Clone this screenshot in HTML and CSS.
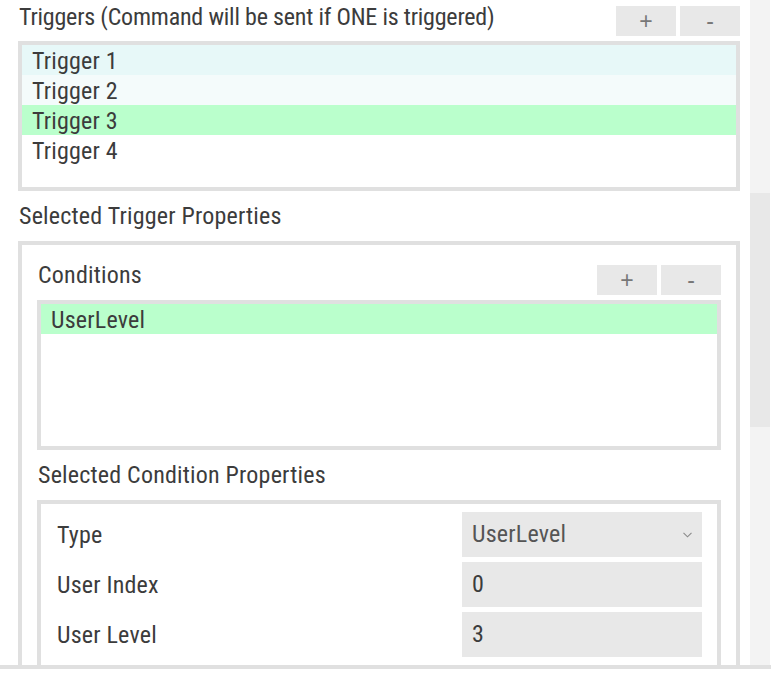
FILE: index.html
```html
<!DOCTYPE html>
<html lang="en">
<head>
<meta charset="utf-8">
<title>Triggers</title>
<link rel="stylesheet" href="styles.css">
</head>
<body>
<div class="viewport">
  <div class="content">
    <div class="list-header">
      <div class="title title-main">Triggers (Command will be sent if ONE is triggered)</div>
      <div class="btns">
        <button class="btn">+</button>
        <button class="btn">-</button>
      </div>
    </div>
    <div class="listbox">
      <div class="item item-hover">Trigger 1</div>
      <div class="item item-alt">Trigger 2</div>
      <div class="item item-selected">Trigger 3</div>
      <div class="item">Trigger 4</div>
    </div>
    <div class="section-label">Selected Trigger Properties</div>
    <div class="panel">
      <div class="list-header">
        <div class="title title-sub">Conditions</div>
        <div class="btns">
          <button class="btn">+</button>
          <button class="btn">-</button>
        </div>
      </div>
      <div class="listbox">
        <div class="item item-selected">UserLevel</div>
      </div>
      <div class="section-label">Selected Condition Properties</div>
      <div class="panel panel-inner">
        <div class="prop-row">
          <div class="prop-label">Type</div>
          <div class="field">
            <span class="field-value muted">UserLevel</span>
            <svg class="chevron" width="9" height="6" viewBox="0 0 9 6"><path d="M0.5 0.8 L4.5 4.8 L8.5 0.8" fill="none" stroke="#8a8a8a" stroke-width="1.1"/></svg>
          </div>
        </div>
        <div class="prop-row">
          <div class="prop-label">User Index</div>
          <div class="field"><span class="field-value">0</span></div>
        </div>
        <div class="prop-row">
          <div class="prop-label">User Level</div>
          <div class="field"><span class="field-value">3</span></div>
        </div>
      </div>
    </div>
  </div>
  <div class="scrollbar">
    <div class="scroll-thumb"></div>
  </div>
</div>
</body>
</html>
```
FILE: styles.css
```css
* { box-sizing: border-box; }

html, body {
  margin: 0;
  padding: 0;
  background: #ffffff;
}

body {
  font-family: "Roboto Condensed", "Liberation Sans Narrow", "Arial Narrow", "Liberation Sans", sans-serif;
  font-size: 24px;
  letter-spacing: 0.2px;
  color: #3c3c3c;
  width: 771px;
}

.viewport {
  display: flex;
  height: 669px;
  overflow: hidden;
  border-bottom: 4px solid #e0e0e0;
}

.content {
  flex: 0 0 750px;
  padding: 0 10px 0 18px;
}

.list-header {
  display: flex;
  justify-content: space-between;
  align-items: flex-start;
  height: 41px;
}

.title {
  line-height: 34px;
  padding-left: 1px;
  white-space: nowrap;
}

.title-main {
  letter-spacing: -0.2px;
}

.title-sub {
  line-height: 33px;
}

.btns {
  display: flex;
  gap: 4px;
  margin-top: 6px;
}

.btn {
  width: 60px;
  height: 30px;
  border: none;
  padding: 0;
  margin: 0;
  background: #e8e8e8;
  color: #777777;
  font-family: "Liberation Sans", sans-serif;
  font-size: 23px;
  line-height: 30px;
}

.listbox {
  height: 150px;
  border: 4px solid #e0e0e0;
  background: #ffffff;
}

.item {
  height: 30px;
  padding-top: 1px;
  line-height: 30px;
  padding-left: 10px;
  white-space: nowrap;
}

.item-hover { background: #e7f8f8; }
.item-alt { background: #f4fbfb; }
.item-selected { background: #baffcc; }

.section-label {
  height: 50px;
  padding-top: 7px;
  line-height: 37px;
  padding-left: 1px;
}

.panel {
  border: 4px solid #e0e0e0;
  padding: 14px 15px 0 15px;
}

.panel-inner {
  padding: 8px 15px 8px 16px;
}

.prop-row {
  display: flex;
  justify-content: space-between;
  align-items: center;
  height: 45px;
  margin-bottom: 5px;
}

.field {
  width: 240px;
  height: 45px;
  background: #e8e8e8;
  display: flex;
  align-items: center;
  justify-content: space-between;
  padding: 0 10px;
}

.field-value {
  line-height: 45px;
}

.muted { color: #555555; }

.chevron {
  display: block;
}

.scrollbar {
  flex: 0 0 20px;
  background: #f3f3f3;
}

.scroll-thumb {
  margin-top: 193px;
  height: 234px;
  background: #e8e8e8;
}
```
